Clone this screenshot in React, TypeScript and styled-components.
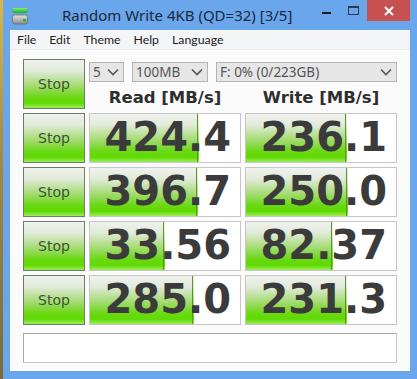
import React from "react";
import styled, { createGlobalStyle } from "styled-components";

const Global = createGlobalStyle`
  html, body { margin: 0; padding: 0; }
  body { width: 417px; height: 379px; overflow: hidden; background: #6aa6ec; }
`;

const Screen = styled.div`
  display: flex;
  width: 417px;
  height: 379px;
`;

const DesktopEdge = styled.div`
  width: 3px;
  background: linear-gradient(to bottom, #d8b848 0%, #a88a40 40%, #7a6a3a 100%);
`;

const Frame = styled.div`
  flex: 1;
  display: flex;
  flex-direction: column;
  background: #6aa6ec;
`;

const TitleBar = styled.div`
  height: 30px;
  display: flex;
  align-items: flex-start;
  padding-right: 7px;
`;

const AppIcon = styled.svg`
  margin: 7px 0 0 9px;
  flex: none;
`;

const Title = styled.div`
  margin: 6px 0 0 34px;
  font-family: "Noto Sans", "Open Sans", sans-serif;
  font-size: 15px;
  line-height: 18px;
  color: #1c2838;
  white-space: nowrap;
  flex: 1;
`;

const CtrlBox = styled.div<{ $w: number; $bg?: string }>`
  width: ${(p) => p.$w}px;
  height: 21px;
  display: flex;
  align-items: center;
  justify-content: center;
  background: ${(p) => p.$bg || "transparent"};
  flex: none;
`;

const Client = styled.div`
  flex: 1;
  margin: 0 7px 8px 7px;
  display: flex;
  flex-direction: column;
  background: #fbfbfb;
`;

const MenuBar = styled.div`
  height: 20px;
  display: flex;
  align-items: center;
  gap: 13px;
  padding-left: 7px;
  background: #f4f5f7;
  border-bottom: 1px solid #eceef0;
  box-sizing: border-box;
`;

const MenuItem = styled.span`
  font-family: Lato, "Noto Sans", sans-serif;
  font-size: 12.3px;
  color: #222;
`;

const Body = styled.div`
  flex: 1;
  padding: 9px 13px 0 13px;
  display: flex;
  flex-direction: column;
`;

const Grid = styled.div`
  display: grid;
  grid-template-columns: 62px 152px 152px;
  grid-auto-rows: 50px;
  column-gap: 4px;
  row-gap: 4px;
`;

const greenGrad = `linear-gradient(to bottom, #f0f2ee 0%, #e2ebdb 22%, #a8dc78 52%, #6ad814 78%, #60da00 90%, #9cec5c 100%)`;

const StopButton = styled.div`
  box-sizing: border-box;
  border: 1px solid #6d7d6a;
  background: ${greenGrad};
  display: flex;
  align-items: center;
  justify-content: center;
  font-family: "Comic Sans MS", "DejaVu Sans", sans-serif;
  font-size: 14px;
  color: #3c5430;
`;

const TopControls = styled.div`
  grid-column: 2 / 4;
  display: flex;
  flex-direction: column;
`;

const SelectRow = styled.div`
  display: flex;
  gap: 8px;
  margin-top: 3px;
  height: 20px;
`;

const Select = styled.div<{ $w: number }>`
  box-sizing: border-box;
  width: ${(p) => p.$w}px;
  height: 20px;
  border: 1px solid #b4b4b4;
  background: #e6e6e6;
  display: flex;
  align-items: center;
  justify-content: space-between;
  padding: 0 4px 0 3px;
  font-family: "Noto Sans", "Open Sans", sans-serif;
  font-size: 13.5px;
  color: #555;
`;

const HeaderRow = styled.div`
  display: grid;
  grid-template-columns: 152px 152px;
  column-gap: 4px;
  margin-top: 5px;
`;

const Header = styled.div`
  text-align: center;
  font-family: "DejaVu Sans", Verdana, sans-serif;
  font-weight: bold;
  font-size: 16.5px;
  line-height: 22px;
  color: #2e2e2e;
`;

const ValueCell = styled.div<{ $bar: number }>`
  box-sizing: border-box;
  border: 1px solid #c6c6c6;
  background-color: #fff;
  background-image: linear-gradient(#4f9e1e, #4f9e1e), ${greenGrad};
  background-repeat: no-repeat;
  background-size: 1px 100%, ${(p) => p.$bar}px 100%;
  background-position: ${(p) => p.$bar - 2}px 0, 0 0;
  text-align: right;
  padding-right: 9px;
  font-family: "DejaVu Sans", Verdana, sans-serif;
  font-weight: bold;
  font-size: 40px;
  line-height: 47px;
  color: #3b3b3b;
  white-space: nowrap;
`;

const StatusBox = styled.div`
  margin-top: 8px;
  height: 30px;
  box-sizing: border-box;
  border: 1px solid #a9a9a9;
  border-right-color: #c8c8c8;
  border-bottom-color: #c8c8c8;
  background: #fff;
`;

const Chevron = () => (
  <svg width="12" height="8" viewBox="0 0 12 8">
    <path d="M1 1.5 L6 6.5 L11 1.5" fill="none" stroke="#555" strokeWidth="1.6" />
  </svg>
);

const rows: [string, string][] = [
  ["424.4", "236.1"],
  ["396.7", "250.0"],
  ["33.56", "82.37"],
  ["285.0", "231.3"],
];

const barWidth = (v: string) => Math.round(30.9 * Math.log10(parseFloat(v)) + 27.8);

export default function App() {
  return (
    <>
      <Global />
      <Screen>
        <DesktopEdge />
        <Frame>
          <TitleBar>
            <AppIcon width="16" height="18" viewBox="0 0 16 18">
              <defs>
                <linearGradient id="gb" x1="0" y1="0" x2="0" y2="1">
                  <stop offset="0" stopColor="#7ef07a" />
                  <stop offset="1" stopColor="#1cae1c" />
                </linearGradient>
                <linearGradient id="gd" x1="0" y1="0" x2="0" y2="1">
                  <stop offset="0" stopColor="#e4e4e4" />
                  <stop offset="1" stopColor="#8a8a8a" />
                </linearGradient>
              </defs>
              <rect x="0.5" y="1" width="15" height="5" rx="1.5" fill="url(#gb)" />
              <rect x="0.5" y="8" width="15" height="9" rx="2" fill="url(#gd)" stroke="#6e6e6e" strokeWidth="0.8" />
              <rect x="11" y="12" width="3" height="2.5" fill="#22b822" />
            </AppIcon>
            <Title>Random Write 4KB (QD=32) [3/5]</Title>
            <CtrlBox $w={27}>
              <svg width="10" height="10" viewBox="0 0 10 10">
                <rect x="0" y="6" width="9" height="2" fill="#1e1e1e" />
              </svg>
            </CtrlBox>
            <CtrlBox $w={27}>
              <svg width="11" height="10" viewBox="0 0 11 10">
                <rect x="0.5" y="0.5" width="10" height="8" fill="none" stroke="#2a3a4a" strokeWidth="1" />
                <rect x="0.5" y="0.5" width="10" height="1.5" fill="#2a3a4a" />
              </svg>
            </CtrlBox>
            <CtrlBox $w={43} $bg="#c75050">
              <svg width="10" height="10" viewBox="0 0 10 10">
                <path d="M1 1 L9 9 M9 1 L1 9" stroke="#fff" strokeWidth="2" />
              </svg>
            </CtrlBox>
          </TitleBar>
          <Client>
            <MenuBar>
              <MenuItem>File</MenuItem>
              <MenuItem>Edit</MenuItem>
              <MenuItem>Theme</MenuItem>
              <MenuItem>Help</MenuItem>
              <MenuItem>Language</MenuItem>
            </MenuBar>
            <Body>
              <Grid>
                <StopButton>Stop</StopButton>
                <TopControls>
                  <SelectRow>
                    <Select $w={35}>5<Chevron /></Select>
                    <Select $w={76}>100MB<Chevron /></Select>
                    <Select $w={181}>F: 0% (0/223GB)<Chevron /></Select>
                  </SelectRow>
                  <HeaderRow>
                    <Header>Read [MB/s]</Header>
                    <Header>Write [MB/s]</Header>
                  </HeaderRow>
                </TopControls>
                {rows.map(([r, w]) => (
                  <React.Fragment key={r}>
                    <StopButton>Stop</StopButton>
                    <ValueCell $bar={barWidth(r)}>{r}</ValueCell>
                    <ValueCell $bar={barWidth(w)}>{w}</ValueCell>
                  </React.Fragment>
                ))}
              </Grid>
              <StatusBox />
            </Body>
          </Client>
        </Frame>
      </Screen>
    </>
  );
}
